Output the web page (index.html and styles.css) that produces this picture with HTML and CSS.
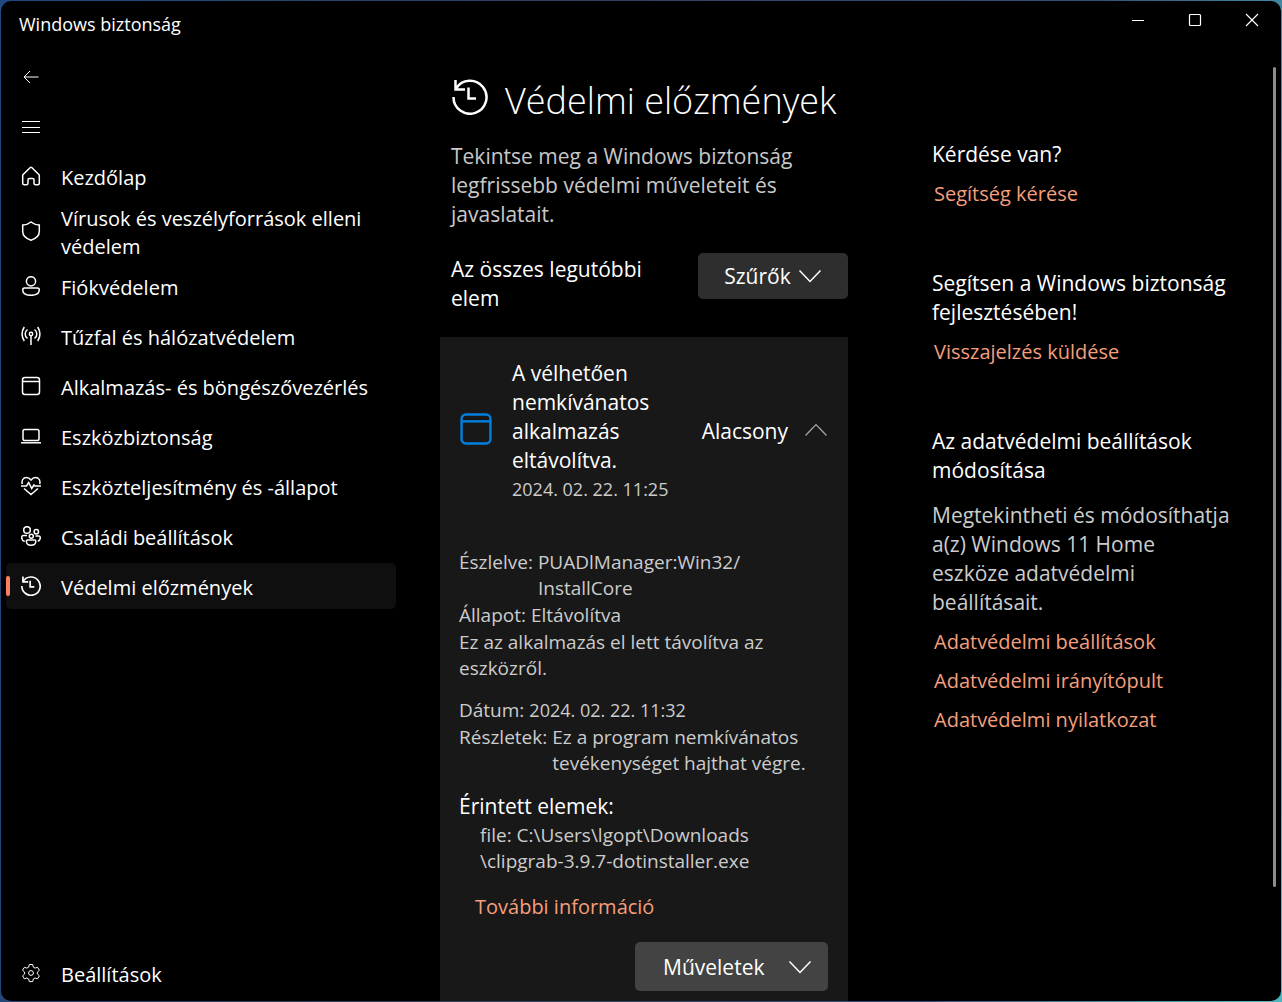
FILE: index.html
```html
<!DOCTYPE html>
<html lang="hu">
<head>
<meta charset="utf-8">
<meta name="viewport" content="width=device-width, initial-scale=1">
<title>Windows biztonság</title>
<link rel="stylesheet" href="styles.css">
</head>
<body>
<svg class="sprite" aria-hidden="true">
  <symbol id="history" viewBox="0 0 36 36"><path d="M1.500 18a16.500 16.500 0 1 0 2.500-8.500M3.500 1v9.500H13M16.500 8.500v11H24"/></symbol>
  <symbol id="app" viewBox="0 0 20 20"><rect x="1.500" y="1.500" width="17" height="17" rx="2.500"/><path d="M1.500 5.500h17"/></symbol>
  <symbol id="chevron" viewBox="0 0 24 24"><path d="M1.500 6.500 12 17.500 22.500 6.500"/></symbol>
</svg>
<div class="window">
  <header class="titlebar">
    <span class="app-name">Windows biztonság</span>
    <div class="window-buttons">
      <button type="button" aria-label="Kis méret"><svg viewBox="0 0 14 14"><path d="M1 7.500h12"/></svg></button>
      <button type="button" aria-label="Teljes méret"><svg viewBox="0 0 14 14"><rect x="1.500" y="1.500" width="11" height="11" rx="1"/></svg></button>
      <button type="button" aria-label="Bezárás"><svg viewBox="0 0 14 14"><path d="m1 1 12 12M13 1 1 13"/></svg></button>
    </div>
  </header>
  <div class="body">
    <nav class="sidebar">
      <button class="icon-button" type="button" aria-label="Vissza"><svg class="icon thin" viewBox="0 0 20 20"><path d="M17.500 10H3M9 4l-6 6 6 6"/></svg></button>
      <button class="icon-button" type="button" aria-label="Menü"><svg class="icon thin" viewBox="0 0 20 20"><path d="M1 4.500h18M1 10.500h18M1 15.500h18"/></svg></button>
      <ul class="nav-list">
        <li><a class="nav-item" href="#home"><svg class="icon" viewBox="0 0 20 20"><path d="M1.700 9 9 1.700q1-.9 2 0L18.300 9v8.300q0 1.500-1.500 1.500h-2.300q-1.500 0-1.500-1.500v-3.500q0-1.300-1.300-1.300H8.300Q7 12.500 7 13.800v3.500q0 1.500-1.500 1.500H3.200q-1.500 0-1.500-1.500z"/></svg><span>Kezdőlap</span></a></li>
        <li><a class="nav-item" href="#virus"><svg class="icon" viewBox="0 0 20 20"><path d="M10 1q3.500 2.800 8.300 3v6.500q0 6-8.300 8.700-8.300-2.700-8.300-8.700V4Q6.500 3.800 10 1z"/></svg><span>Vírusok és veszélyforrások elleni védelem</span></a></li>
        <li><a class="nav-item" href="#account"><svg class="icon" viewBox="0 0 20 20"><circle cx="10" cy="5.300" r="4.600"/><path d="M3.500 12h13q1.800 0 1.800 1.800 0 5.500-8.300 5.500t-8.300-5.500Q1.700 12 3.500 12z"/></svg><span>Fiókvédelem</span></a></li>
        <li><a class="nav-item" href="#firewall"><svg class="icon" viewBox="0 0 20 20"><circle cx="10" cy="8" r="1.700"/><path d="M10 10v9M6.500 12.500a5.500 5.500 0 0 1 0-9M13.500 12.500a5.500 5.500 0 0 0 0-9M3.300 15q-4.500-7 0-14M16.700 15q4.500-7 0-14"/></svg><span>Tűzfal és hálózatvédelem</span></a></li>
        <li><a class="nav-item" href="#apps"><svg class="icon"><use href="#app"/></svg><span>Alkalmazás- és böngészővezérlés</span></a></li>
        <li><a class="nav-item" href="#device"><svg class="icon" viewBox="0 0 20 20"><rect x="2" y="3.500" width="16" height="11" rx="1.800"/><path d="M0 16.800h20"/></svg><span>Eszközbiztonság</span></a></li>
        <li><a class="nav-item" href="#health"><svg class="icon" viewBox="0 0 20 20"><path d="M1.300 8Q.2 4 3.200 2q3.800-1.800 6.800 2 3-3.800 6.800-2 3 2 1.900 6M0 10h5.500l2.200-3.500 3 6L13 9l1 1h6M3 12.500l7 6 7-6"/></svg><span>Eszközteljesítmény és -állapot</span></a></li>
        <li><a class="nav-item" href="#family"><svg class="icon" viewBox="0 0 20 20"><circle cx="6" cy="4" r="3.300"/><circle cx="15.300" cy="5.800" r="2.200"/><circle cx="10.300" cy="10.300" r="2"/><path d="M6 9.500H2.500Q.7 9.500.7 11.500q0 3 3 4M14.500 10h3.300q1.500 0 1.500 1.800 0 2.600-2.500 3.400M6.500 14h7.300q1 0 1 1.200 0 4-4.700 4t-4.700-4Q5.400 14 6.500 14z"/></svg><span>Családi beállítások</span></a></li>
        <li><a class="nav-item selected" href="#history-page" aria-current="page"><svg class="icon bold"><use href="#history"/></svg><span>Védelmi előzmények</span></a></li>
      </ul>
      <a class="nav-item settings" href="#settings"><svg class="icon thin" viewBox="0 0 20 20"><circle cx="10" cy="10" r="2.400"/><path d="M8.300 1.500h3.400l.6 2.600 1.800 1 2.500-.8 1.800 3-2 1.800v1.900l2 1.800-1.800 3-2.500-.8-1.800 1-.6 2.600H8.300L7.700 16l-1.800-1-2.500.8-1.800-3 2-1.800V9.100l-2-1.800 1.800-3 2.500.8 1.800-1z"/></svg><span>Beállítások</span></a>
    </nav>
    <main class="content">
      <section class="history">
        <h1><svg class="title-icon"><use href="#history"/></svg>Védelmi előzmények</h1>
        <p class="intro">Tekintse meg a Windows biztonság legfrissebb védelmi műveleteit és javaslatait.</p>
        <div class="filter-row">
          <p>Az összes legutóbbi elem</p>
          <button class="filter-button" type="button">Szűrők<svg class="chevron"><use href="#chevron"/></svg></button>
        </div>
        <article class="card">
          <button class="card-head" type="button" aria-expanded="true">
            <svg class="app-icon"><use href="#app"/></svg>
            <span class="card-title">A vélhetően nemkívánatos alkalmazás eltávolítva.<span class="date">2024. 02. 22. 11:25</span></span>
            <span>Alacsony</span>
            <svg class="chevron up"><use href="#chevron"/></svg>
          </button>
          <dl class="details">
            <div><dt>Észlelve:</dt><dd>PUADlManager:Win32/<wbr>InstallCore</dd></div>
            <div><dt>Állapot:</dt><dd>Eltávolítva</dd></div>
          </dl>
          <p class="note">Ez az alkalmazás el lett távolítva az eszközről.</p>
          <dl class="details">
            <div><dt>Dátum:</dt><dd class="date">2024. 02. 22. 11:32</dd></div>
            <div><dt>Részletek:</dt><dd>Ez a program nemkívánatos tevékenységet hajthat végre.</dd></div>
          </dl>
          <h2>Érintett elemek:</h2>
          <p class="path">file: C:\Users\lgopt\Downloads<wbr>\clipgrab-3.9.7-dotinstaller.exe</p>
          <a class="more" href="#more">További információ</a>
          <button class="actions-button" type="button">Műveletek<svg class="chevron"><use href="#chevron"/></svg></button>
        </article>
      </section>
      <aside class="help">
        <section>
          <h2>Kérdése van?</h2>
          <a href="#help">Segítség kérése</a>
        </section>
        <section>
          <h2>Segítsen a Windows biztonság fejlesztésében!</h2>
          <a href="#feedback">Visszajelzés küldése</a>
        </section>
        <section>
          <h2>Az adatvédelmi beállítások módosítása</h2>
          <p>Megtekintheti és módosíthatja a(z) Windows 11 Home eszköze adatvédelmi beállításait.</p>
          <a href="#privacy">Adatvédelmi beállítások</a>
          <a href="#dashboard">Adatvédelmi irányítópult</a>
          <a href="#statement">Adatvédelmi nyilatkozat</a>
        </section>
      </aside>
    </main>
  </div>
  <div class="scroll-thumb"></div>
</div>
</body>
</html>
```
FILE: styles.css
```css
* { box-sizing: border-box; }

body {
  margin: 0;
  padding: 1px;
  height: 100vh;
  background: linear-gradient(100deg, #1d4a80, #34405e 40%, #33507c 75%, #4fb5c0 99%);
  color: #fff;
  font: 21px/29px "Open Sans", "Noto Sans", sans-serif;
}

h1, h2, p, ul, dl, dd { margin: 0; padding: 0; font-weight: 400; }
h2 { font-size: 21px; }
ul { list-style: none; }
a { color: #f49f7c; font-size: 20px; text-decoration: none; }
button {
  padding: 0;
  border: 0;
  background: none;
  color: inherit;
  font: inherit;
  text-align: left;
}
svg { flex: none; fill: none; stroke: currentColor; stroke-width: 1.5; }
.sprite { position: absolute; width: 0; height: 0; }

.window {
  position: relative;
  display: flex;
  flex-direction: column;
  height: 100%;
  overflow: hidden;
  border-radius: 10px;
  background: #000;
}

.titlebar { display: flex; justify-content: space-between; height: 49px; padding: 0 1px 0 18px; }
.app-name { padding-top: 9px; font-size: 18px; }
.window-buttons { display: flex; height: 38px; }
.window-buttons button { display: grid; place-items: center; width: 57px; }
.window-buttons svg { width: 14px; height: 14px; stroke-width: 1.2; }

.body { display: flex; flex: 1; min-height: 0; }

.sidebar { display: flex; flex-direction: column; width: 395px; padding: 2px 0 5px 5px; line-height: 28px; }
.icon { width: 20px; height: 20px; }
.thin { stroke-width: 1; }
.bold { stroke-width: 3; }
.icon-button { display: flex; align-items: center; height: 50px; padding-left: 15px; }
.nav-list { display: grid; gap: 4px; margin-top: 1px; }
.nav-item {
  position: relative;
  display: flex;
  align-items: center;
  gap: 20px;
  min-height: 46px;
  padding-left: 15px;
  border-radius: 5px;
  color: #fff;
}
.nav-item span { margin-bottom: -2px; padding-top: 2px; }
.selected { background: #0f0f0f; }
.selected::before {
  content: "";
  position: absolute;
  left: 0;
  width: 4px;
  height: 20px;
  border-radius: 2px;
  background: #f98063;
}
.settings { margin-top: auto; }

.content { display: flex; flex: 1; gap: 84px; padding: 0 43px 0 44px; overflow: hidden; }
.history { display: flex; flex: 4 1 0; flex-direction: column; min-width: 0; padding-top: 24px; }
h1 { display: flex; align-items: center; gap: 17px; margin-left: 12px; font-size: 36px; line-height: 54px; font-weight: 300; white-space: nowrap; }
.title-icon { width: 36px; height: 36px; margin-bottom: 8px; stroke-width: 2.5; }
.intro { margin: 14px 0 0 11px; padding-right: 30px; color: #c8c8c8; }
.filter-row { display: flex; justify-content: space-between; gap: 24px; margin: 24px 0 24px 11px; }
.filter-row p { flex: 1; padding-top: 2px; }
.chevron { width: 24px; height: 24px; }
.filter-button, .actions-button { display: flex; align-items: center; border-radius: 5px; }
.filter-button { justify-content: center; gap: 7px; width: 150px; height: 46px; background: #2e2e2e; }

.card { display: flex; flex: 1 0 auto; flex-direction: column; padding: 22px 20px 10px 19px; background: #181818; color: #ccc; font-size: 19px; line-height: 26px; }
.card-head { display: grid; grid-template-columns: 32px 1fr auto 24px; align-items: center; gap: 16px; margin-bottom: 45px; color: #fff; font-size: 21px; line-height: 29px; }
.app-icon { width: 34px; height: 34px; margin-bottom: 5px; color: #0080e0; stroke-width: 1.4; }
.card-title { padding-left: 5px; }
.date { display: block; color: #ccc; font-size: 18px; white-space: nowrap; }
.up { margin-bottom: 4px; transform: rotate(180deg); color: #aaa; stroke-width: 1.2; }
.details { display: grid; gap: 1px; }
.details div { display: flex; gap: 5px; }
.note { margin: 1px 0 16px; }
.card h2 { margin: 16px 0 1px; color: #fff; line-height: 29px; }
.path { padding: 0 40px 0 21px; }
.more { margin: 18px 0 21px 16px; line-height: 29px; }
.actions-button { align-self: flex-end; gap: 24px; width: 193px; height: 49px; padding-left: 28px; background: #434343; color: #fff; font-size: 21px; }

.help { display: grid; flex: 3 1 0; align-content: start; gap: 61px; min-width: 0; padding-top: 90px; }
.help section { display: grid; gap: 10px; }
.help p { margin: 6px 0 0; padding-right: 4px; color: #ccc; }
.help a { padding-left: 2px; }

.scroll-thumb { position: absolute; top: 66px; right: 5px; width: 3px; height: 82%; border-radius: 2px; background: #8c8c8c; }
```
